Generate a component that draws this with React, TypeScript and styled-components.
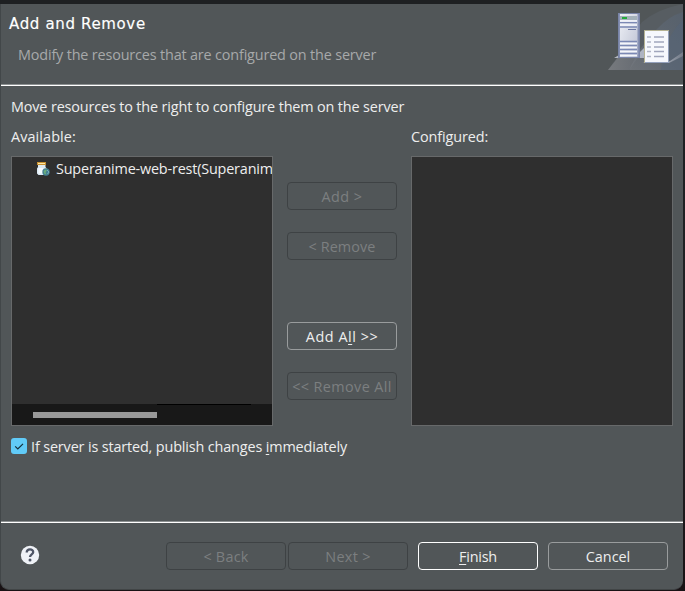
import React from "react";
import styled, { createGlobalStyle } from "styled-components";

const GlobalStyle = createGlobalStyle`
  * { box-sizing: border-box; }
  body {
    margin: 0;
    overflow: hidden;
    background: #1c1a1c;
    font-family: "Open Sans", "Noto Sans", sans-serif;
    font-size: 14.4px;
    color: #eeeeee;
  }
`;

const Desktop = styled.div`
  width: 685px;
  height: 591px;
  padding: 4px 2px 1px 0;
  background: linear-gradient(#1e2022, #202124 70%, #181214);
`;

const Dialog = styled.div`
  width: 683px;
  height: 586px;
  display: flex;
  flex-direction: column;
  background: #515658;
  border-left: 1px solid #424749;
  border-bottom: 1px solid #414546;
  border-radius: 0 0 9px 9px;
  overflow: hidden;
`;

const Header = styled.header`
  height: 82px;
  flex: none;
  display: flex;
  justify-content: space-between;
  border-bottom: 1px solid #ffffff;
  box-shadow: inset 0 -1px 0 #8d9192;
`;

const Title = styled.h1`
  margin: 10px 0 0 8px;
  font: 400 15px/20px "DejaVu Sans", sans-serif;
  letter-spacing: 0.65px;
  color: #ffffff;
  -webkit-text-stroke: 0.15px #ffffff;
`;

const Text = styled.div<{ $spacing?: number; $muted?: boolean }>`
  line-height: 20px;
  white-space: nowrap;
  letter-spacing: ${(p) => p.$spacing ?? 0}px;
  color: ${(p) => (p.$muted ? "#a7a9aa" : "#eeeeee")};
`;

const Subtitle = styled(Text)`
  margin: 11px 0 0 17px;
`;

const Body = styled.main`
  flex: 1;
  padding: 11px 10px 0;
`;

const Columns = styled.div`
  display: grid;
  grid-template-columns: 262px 110px 262px;
  column-gap: 14px;
  margin-top: 10px;
`;

const ListBox = styled.div`
  height: 270px;
  margin-top: 9px;
  display: flex;
  flex-direction: column;
  justify-content: space-between;
  background: #2f2f2f;
  border: 1px solid #67696a;
  overflow: hidden;
`;

const ListItem = styled.div`
  display: flex;
  align-items: center;
  gap: 6px;
  height: 24px;
  padding-left: 24px;
  overflow: hidden;

  svg { flex: none; }
`;

const ScrollTrack = styled.div`
  height: 21px;
  padding: 8px 0 0 21px;
  background: linear-gradient(#000000, #000000) 145px 0 / 94px 1px no-repeat #181818;
`;

const ScrollThumb = styled.div`
  width: 124px;
  height: 6px;
  background: #999999;
`;

const Actions = styled.div`
  display: flex;
  flex-direction: column;
  gap: 22px;
  padding-top: 55px;
`;

const Spacer = styled.div`
  height: 18px;
`;

type Tone = "disabled" | "normal" | "primary";
const borders: Record<Tone, string> = { disabled: "#3e4244", normal: "#999c9d", primary: "#ffffff" };

const Button = styled.button<{ $tone: Tone; $width: number; $spacing?: number }>`
  width: ${(p) => p.$width}px;
  height: 28px;
  flex: none;
  padding: 1px 0 0;
  border: 1px solid ${(p) => borders[p.$tone]};
  border-radius: 4px;
  background: transparent;
  color: ${(p) => (p.$tone === "disabled" ? "#7c7f80" : "#eeeeee")};
  font: inherit;
  line-height: 20px;
  letter-spacing: ${(p) => p.$spacing ?? 0}px;
  white-space: nowrap;
`;

const Mnemonic = styled.span`
  text-decoration: underline;
  text-decoration-thickness: 1px;
  text-underline-offset: 2px;
  text-decoration-skip-ink: none;
`;

const CheckRow = styled.label`
  display: flex;
  align-items: center;
  gap: 4px;
  margin-top: 10px;
  height: 20px;
`;

const CheckLabel = styled(Text)`
  padding-top: 1px;
`;

const CheckBox = styled.span`
  width: 16px;
  height: 16px;
  border-radius: 3px;
  background: #61cbf8;
  display: flex;
`;

const Footer = styled.footer`
  height: 67px;
  flex: none;
  display: flex;
  align-items: center;
  padding: 0 15px 0 19px;
  border-top: 1px solid #ffffff;
  box-shadow: 0 -1px 0 #8d9192;
`;

const HelpMark = styled.svg`
  margin-bottom: 2px;
`;

const FooterButtons = styled.div`
  margin-left: auto;
  display: flex;
  gap: 10px;
`;

const Pair = styled.div`
  display: flex;
  gap: 2px;
`;

function ServerBanner() {
  return (
    <svg width="76" height="66" viewBox="0 0 76 66">
      <defs>
        <linearGradient id="beam" x1="0" y1="1" x2="1" y2="0">
          <stop offset="0" stopColor="#777b81" />
          <stop offset="0.5" stopColor="#626a74" />
          <stop offset="1" stopColor="#566271" />
        </linearGradient>
        <linearGradient id="tower" x1="0" y1="0" x2="1" y2="1">
          <stop offset="0" stopColor="#eef0f6" />
          <stop offset="1" stopColor="#bcc1d2" />
        </linearGradient>
        <linearGradient id="glow" x1="0" y1="0" x2="1" y2="0">
          <stop offset="0" stopColor="#d8dce4" />
          <stop offset="1" stopColor="#747c89" />
        </linearGradient>
        <linearGradient id="floor" x1="0" y1="0" x2="1" y2="0">
          <stop offset="0" stopColor="#777a7e" />
          <stop offset="1" stopColor="#666b72" />
        </linearGradient>
      </defs>
      <path d="M1 66 L35 18 Q50 5 76 0 V66Z" fill="#575d62" />
      <path d="M1 66 L12 52 H32 L22 66Z" fill="url(#floor)" />
      <path d="M22 66 Q34 40 50 25 Q62 12 76 8 V66Z" fill="url(#beam)" opacity=".7" />
      <path d="M54 66 Q56 35 76 16 V66Z" fill="#53647b" opacity=".4" />
      <g transform="translate(1 0)">
        <path d="M6 54 L11 51 H32 L36 47 V54Z" fill="#b5b8c0" />
        <path d="M34 59 L62 57 L75 48 V52 L61 59Z" fill="url(#glow)" />
        <path d="M32 48 L36 44 V54 H30Z" fill="#aeb4c2" />
        <rect x="10.5" y="9.5" width="21" height="44" fill="#8791b3" stroke="#7984a7" />
        <rect x="12" y="10" width="17.5" height="43" fill="url(#tower)" />
        <rect x="12" y="12" width="17" height="4" fill="#a4b1b9" />
        <rect x="14" y="13" width="5" height="2" fill="#23a83c" />
        <path d="M12 18.5H29M12 23H29M12 37.5H29M12 41.5H29M12 45.5H29M12 49.5H29" stroke="#7b88b4" strokeWidth="1.5" />
        <path d="M12 17H29M12 21H29M12 39.5H29M12 43.5H29M12 47.5H29M12 51.5H29" stroke="#f4f5fb" strokeWidth="1.5" />
        <path d="M20 25.5H28" stroke="#6d78a1" />
        <rect x="36.5" y="26.5" width="24" height="32" fill="#f6f8fd" stroke="#b5b394" />
        <path d="M37 58.5H61M60.5 27V58" stroke="#94a1bc" />
        <path d="M39 33H43M39 38H43M39 43H43M39 47.5H43M39 52.5H43" stroke="#b2b6c6" strokeWidth="1.6" />
        <path d="M46 33H56M46 38H56M46 43H56M46 47.5H56M46 52.5H56" stroke="#a1a6bd" strokeWidth="1.6" />
      </g>
    </svg>
  );
}

function ModuleIcon() {
  return (
    <svg width="14" height="16" viewBox="0 0 14 16">
      <path d="M2 3.5H9.5V6L11 8V12.5L9.5 14H2.5L1 12.5V7.5L2 6Z" fill="#dceaf5" />
      <path d="M2.5 7H7V12.5H2.5Z" fill="#f6fbff" />
      <rect x="1" y="1" width="9" height="3" fill="#c89132" />
      <rect x="2" y="2" width="7" height="1" fill="#ffe6a1" />
      <circle cx="10" cy="11" r="3.7" fill="#437f91" />
      <path d="M7.5 10.5L9 8.5L11 9L9.5 11.5L10.5 13.5L8.5 13Z" fill="#69ad7b" />
      <path d="M11 9L13 11L11.5 13" fill="none" stroke="#76adbf" />
    </svg>
  );
}

function HelpIcon() {
  return (
    <HelpMark width="20" height="20" viewBox="0 0 20 20">
      <circle cx="10" cy="10" r="9.2" fill="#eff2f7" />
      <path d="M6.7 7.6C6.7 3.4 13.4 3.5 13.2 7.2C13.1 9.4 10.1 9.5 10 12" fill="none" stroke="#4f5667" strokeWidth="2.3" />
      <circle cx="10" cy="14.9" r="1.5" fill="#4f5667" />
    </HelpMark>
  );
}

export default function App() {
  return (
    <Desktop>
      <GlobalStyle />
      <Dialog>
        <Header>
          <div>
            <Title>Add and Remove</Title>
            <Subtitle $muted $spacing={-0.16}>Modify the resources that are configured on the server</Subtitle>
          </div>
          <ServerBanner />
        </Header>
        <Body>
          <Text $spacing={-0.14}>Move resources to the right to configure them on the server</Text>
          <Columns>
            <div>
              <Text $spacing={0.1}>Available:</Text>
              <ListBox>
                <ListItem>
                  <ModuleIcon />
                  <Text $spacing={-0.18}>Superanime-web-rest(Superanim</Text>
                </ListItem>
                <ScrollTrack>
                  <ScrollThumb />
                </ScrollTrack>
              </ListBox>
            </div>
            <Actions>
              <Button $tone="disabled" $width={110} $spacing={0.5} disabled>Add &gt;</Button>
              <Button $tone="disabled" $width={110} $spacing={0.1} disabled>&lt; Remove</Button>
              <Spacer />
              <Button $tone="normal" $width={110} $spacing={0.55}>Add A<Mnemonic>l</Mnemonic>l &gt;&gt;</Button>
              <Button $tone="disabled" $width={110} $spacing={0.38} disabled>&lt;&lt; Remove All</Button>
            </Actions>
            <div>
              <Text $spacing={-0.1}>Configured:</Text>
              <ListBox />
            </div>
          </Columns>
          <CheckRow>
            <CheckBox>
              <svg width="16" height="16" viewBox="0 0 16 16">
                <path d="M4.2 8.4L6.8 11L12 5.8" fill="none" stroke="#12303d" strokeWidth="1.2" />
              </svg>
            </CheckBox>
            <CheckLabel $spacing={-0.14}>If server is started, publish changes <Mnemonic>i</Mnemonic>mmediately</CheckLabel>
          </CheckRow>
        </Body>
        <Footer>
          <HelpIcon />
          <FooterButtons>
            <Pair>
              <Button $tone="disabled" $width={120} $spacing={0.25} disabled>&lt; Back</Button>
              <Button $tone="disabled" $width={120} $spacing={0.3} disabled>Next &gt;</Button>
            </Pair>
            <Button $tone="primary" $width={120} $spacing={-0.2}><Mnemonic>F</Mnemonic>inish</Button>
            <Button $tone="normal" $width={120}>Cancel</Button>
          </FooterButtons>
        </Footer>
      </Dialog>
    </Desktop>
  );
}
